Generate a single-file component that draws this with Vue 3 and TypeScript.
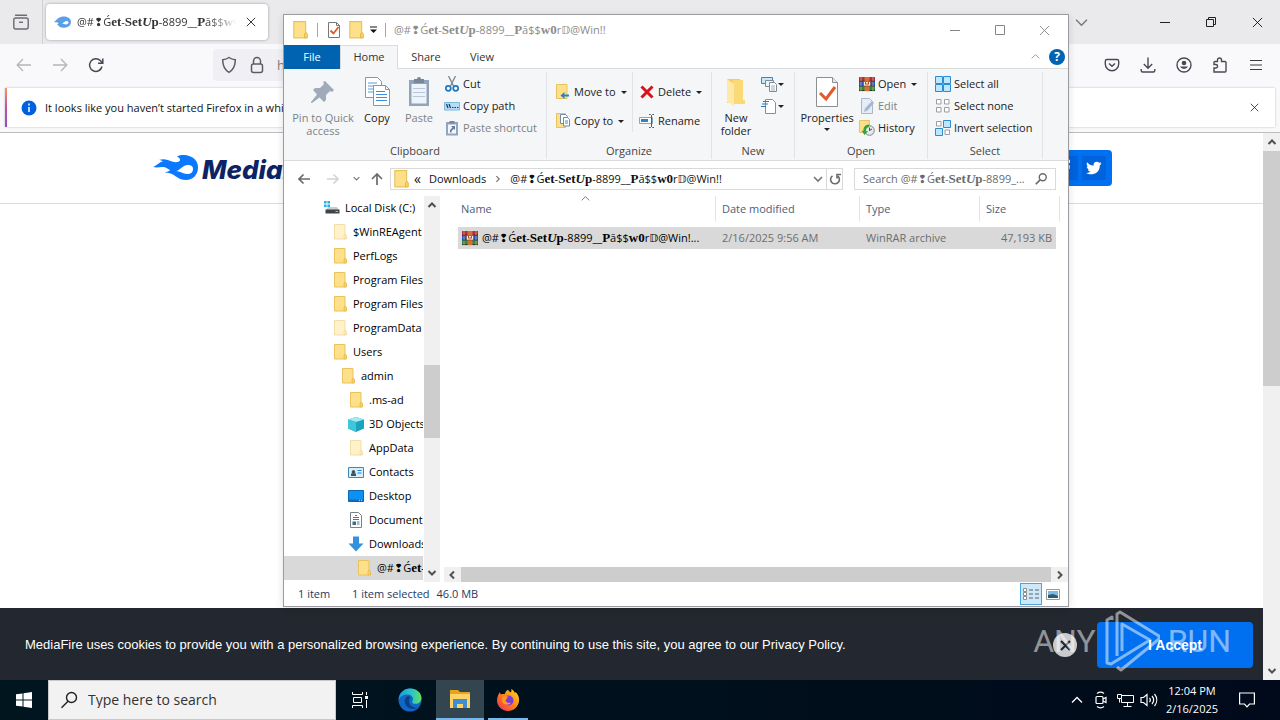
<script setup lang="ts">
import { ref } from 'vue'

interface TreeNode {
  label: string
  icon: string
  depth: number
}

interface NamePart {
  text: string
  style?: string
}

const stem: NamePart[] = [
  { text: '@#❢Ǵ' },
  { text: 'et', style: 'heavy' },
  { text: '-' },
  { text: 'Set', style: 'heavy' },
  { text: 'U', style: 'slanted' },
  { text: 'p', style: 'heavy' },
]

const tail: NamePart[] = [
  { text: '-8899__' },
  { text: 'P', style: 'heavy' },
  { text: 'ă$$' },
  { text: 'w0', style: 'heavy' },
]

const folderName: NamePart[] = [...stem, ...tail, { text: 'r𝔻@Win!!' }]
const shortName: NamePart[] = [...stem, ...tail, { text: 'r𝔻@Win!...' }]
const searchHint: NamePart[] = [{ text: 'Search ' }, ...stem, { text: '-8899_...' }]

const query = ref('')
const taskQuery = ref('')

const tree: TreeNode[] = [
  { label: 'Local Disk (C:)', icon: 'disk', depth: 0 },
  { label: '$WinREAgent', icon: 'folder-pale', depth: 1 },
  { label: 'PerfLogs', icon: 'folder', depth: 1 },
  { label: 'Program Files', icon: 'folder', depth: 1 },
  { label: 'Program Files (x86)', icon: 'folder', depth: 1 },
  { label: 'ProgramData', icon: 'folder-pale', depth: 1 },
  { label: 'Users', icon: 'folder', depth: 1 },
  { label: 'admin', icon: 'folder', depth: 2 },
  { label: '.ms-ad', icon: 'folder', depth: 3 },
  { label: '3D Objects', icon: 'cube', depth: 3 },
  { label: 'AppData', icon: 'folder-pale', depth: 3 },
  { label: 'Contacts', icon: 'contacts', depth: 3 },
  { label: 'Desktop', icon: 'desktop', depth: 3 },
  { label: 'Documents', icon: 'document', depth: 3 },
  { label: 'Downloads', icon: 'download', depth: 3 },
]
</script>

<template>
  <div class="screen">
    <svg class="sprite" aria-hidden="true">
      <symbol id="folder" viewBox="0 0 16 16">
        <path d="M2.500.5h10.500v14.500h-10.500z" fill="#ffe08a" stroke="#e8c25c" />
        <path d="M12 15v-3.500l1.300-1.500 1.200 1.500V15z" fill="#fbd25f" stroke="#e2b548" stroke-width=".8" />
      </symbol>
      <symbol id="folder-pale" viewBox="0 0 16 16">
        <path d="M2.500.5h10.500v14.500h-10.500z" fill="#fff1c8" stroke="#f1deaa" />
        <path d="M12 15v-3.500l1.300-1.500 1.200 1.500V15z" fill="#fdebb6" stroke="#efd99e" stroke-width=".8" />
      </symbol>
      <symbol id="disk" viewBox="0 0 16 16">
        <path d="M0 1h2.600v2.600H0zM3.400 1H6v2.600H3.400zM0 4.400h2.600V7H0zM3.400 4.400H6V7H3.400z" fill="#1fb5e0" />
        <path d="M4 7h9l2 3H2z" fill="#c9cccf" />
        <path d="M1.500 9.500h14v4h-14z" fill="#3f4448" />
        <path d="M11.500 11h2.500v1h-2.500z" fill="#6fe08a" />
      </symbol>
      <symbol id="cube" viewBox="0 0 16 16">
        <path d="M8 1l8 2.500v9L8 16l-8-3.500v-9z" fill="#1ba3bd" />
        <path d="M0 3.500L8 1l8 2.500L8 6z" fill="#a5eaf2" />
        <path d="M0 3.500L8 6v10l-8-3.500z" fill="#3fc6da" />
      </symbol>
      <symbol id="contacts" viewBox="0 0 16 16">
        <path d="M.5 3.500h15v10H.5z" fill="#d9eefb" stroke="#3f87b8" />
        <path d="M3 12V9.500h1.500a1.800 1.800 0 1 1 2 0H8V12z" fill="#3d5362" />
        <path d="M9.500 6.500h4M9.500 9h4" stroke="#1583d8" stroke-width="1.200" />
      </symbol>
      <symbol id="desktop" viewBox="0 0 16 16">
        <path d="M.5 2.500h15v11H.5z" fill="#0b91f2" stroke="#0868b4" />
        <path d="M1 11.500h14V13H1z" fill="#0a6fc4" />
        <path d="M11 12.300h1M13 12.300h1" stroke="#fff" stroke-width=".8" />
      </symbol>
      <symbol id="document" viewBox="0 0 16 16">
        <path d="M2.500.5h8l3 3v12h-11z" fill="#fff" stroke="#7b8388" />
        <path d="M7 3.500h2M5 5.500h6M5 7.500h6M9 10h2.500M9 12h2.500" stroke="#1c83cf" />
        <path d="M4.500 9.500h3.500v3.500H4.500z" fill="#3c6f82" />
      </symbol>
      <symbol id="download" viewBox="0 0 16 16">
        <path d="M5 .5h6v7h4.500L8 15.500.5 7.500H5z" fill="#3590dd" />
      </symbol>
      <symbol id="winrar" viewBox="0 0 16 16">
        <path d="M0 1h16v4.700H0z" fill="#b62b3f" />
        <path d="M0 5.700h16v4.600H0z" fill="#2f56c6" />
        <path d="M0 10.300h16V15H0z" fill="#2c8c3e" />
        <path d="M0 5.200h16M0 10h16M0 14.600h16" stroke="#1d1f3a" stroke-width=".8" />
        <path d="M5.500 1h5v14h-5z" fill="#d3722d" />
        <path d="M4.500 5.500h7v4.500h-7z" fill="#f4eee0" stroke="#5e4630" stroke-width=".6" />
        <path d="M6.500 6v2.500M8 7v2.500M9.500 6v2.500" stroke="#b7462e" />
        <path d="M2 1v4M2 6v4M2 11v4M14 1v4M14 6v4M14 11v4" stroke="#d8c65a" stroke-width=".7" />
      </symbol>
      <symbol id="sheet-check" viewBox="0 0 32 32">
        <path d="M5.500 1.500h16l5 5v24h-21z" fill="#fff" stroke="#8c8f92" />
        <path d="M21.500 1.500v5h5" fill="#e8e8e8" stroke="#8c8f92" />
        <path d="M9 17l6 6 9-12" fill="none" stroke="#e2592b" stroke-width="3" />
      </symbol>
      <symbol id="pin" viewBox="0 0 32 32">
        <path d="M18 5l9 9-2 2-2-1-4 4 0 5-2 2-4.500-4.500L5 27l-1 0 0-1 6-7.500L6 14l2-2h5l4-4-1-2z" fill="#9fabba" />
      </symbol>
      <symbol id="copy" viewBox="0 0 32 32">
        <path d="M4.500 1.500h12l4 4v16h-16z" fill="#fff" stroke="#8696a8" />
        <path d="M7 7h9M7 10h11M7 13h11M7 16h11" stroke="#5b9bd5" />
        <path d="M12.500 9.500h12l4 4v16h-16z" fill="#fff" stroke="#8696a8" />
        <path d="M24.500 9.500v4h4" fill="none" stroke="#8696a8" />
        <path d="M15 15.500h9M15 18.500h11M15 21.500h11M15 24.500h11" stroke="#3e8ddd" />
      </symbol>
      <symbol id="paste" viewBox="0 0 32 32">
        <path d="M6 4h20v26H6z" fill="#92a3ba" />
        <path d="M8.500 8h15v19.500h-15z" fill="#eef3fa" />
        <path d="M11 3h3a2 2 0 0 1 4 0h3v4H11z" fill="#76869b" />
        <path d="M10 12.500h12M10 16.500h12M10 20.500h12" stroke="#b8c7da" />
      </symbol>
      <symbol id="cut" viewBox="0 0 16 16">
        <path d="M4.500 0l5 10M11.500 0l-5 10" stroke="#7b868f" stroke-width="1.300" fill="none" />
        <circle cx="4.300" cy="12.300" r="2.500" fill="none" stroke="#1e78bd" stroke-width="1.700" />
        <circle cx="11.700" cy="12.300" r="2.500" fill="none" stroke="#1e78bd" stroke-width="1.700" />
      </symbol>
      <symbol id="copypath" viewBox="0 0 16 16">
        <path d="M.5 4.500h15v7.500H.5z" fill="#b6dcf7" stroke="#7cb7e0" />
        <path d="M2.500 6l1.500 4M5 6l1.500 4M8 9.500h1.500M10.500 9.500H12M13 9.500h1.500" stroke="#17395c" stroke-width="1.200" />
      </symbol>
      <symbol id="shortcut" viewBox="0 0 16 16">
        <path d="M2 2h12v13.500H2z" fill="#93a4bc" />
        <path d="M4 4.500h8v9H4z" fill="#f3f7fc" />
        <path d="M5.500 1h5v2.500h-5z" fill="#76869b" />
        <path d="M6 12.500V10l2.500-2.500L7 6h4v4L9.700 8.700 7.500 11v1.500z" fill="#5f7aa3" />
      </symbol>
      <symbol id="moveto" viewBox="0 0 16 16">
        <path d="M1.500.5h10.500v14H1.500z" fill="#ffe08a" stroke="#e8c25c" />
        <path d="M14 10.500h-4.500V8L5.500 11.500l4 3.500v-2.500H14z" fill="#2e83c6" />
      </symbol>
      <symbol id="copyto" viewBox="0 0 16 16">
        <path d="M1.500.5h9v14h-9z" fill="#ffe08a" stroke="#e8c25c" />
        <path d="M5.500 1.500h5l2 2v7h-7z" fill="#fff" stroke="#6f8ba6" />
        <path d="M8.500 4.500h4l2 2v6.500h-6z" fill="#fff" stroke="#6f8ba6" />
        <path d="M10 8h3M10 10h3" stroke="#3e8ddd" />
      </symbol>
      <symbol id="delete" viewBox="0 0 16 16">
        <path d="M2.500 2.500l11 11M13.500 2.500l-11 11" stroke="#d9131b" stroke-width="3" />
      </symbol>
      <symbol id="rename" viewBox="0 0 16 16">
        <path d="M.5 4.500h13v6H.5z" fill="#fff" stroke="#7da9ce" />
        <path d="M2 6h7v3H2z" fill="#2e83c6" />
        <path d="M10 1.500h1.500l1 1 1-1H15M10 14.500h1.500l1-1 1 1H15M12.500 2.500v11" fill="none" stroke="#55585c" />
      </symbol>
      <symbol id="newfolder" viewBox="0 0 32 32">
        <path d="M7 3h13v24H7z" fill="#f3cc63" />
        <path d="M13 4h10v20h2v4H13z" fill="#fbd977" />
        <path d="M7 3l7 5v22l-7-4z" fill="#ffe9a6" />
      </symbol>
      <symbol id="newitem" viewBox="0 0 16 16">
        <path d="M.5 1.500h11v6H.5z" fill="#cbe6f7" stroke="#3c87b8" />
        <path d="M4.500 4.500h8v6h-8z" fill="#e8f3fa" stroke="#7d8b96" />
        <path d="M8.500 6.500h5l2 2v7h-7z" fill="#fff" stroke="#7d8b96" />
        <path d="M10 10h4M10 12h4M10 14h4" stroke="#8a99a5" stroke-width=".8" />
      </symbol>
      <symbol id="easyaccess" viewBox="0 0 16 16">
        <path d="M4.500 1.500h7l3 3v11h-10z" fill="#fff" stroke="#8c8f92" />
        <path d="M2 3.500h6M1 6h6M0 8.500h5" stroke="#2e77b8" stroke-width="1.200" />
      </symbol>
      <symbol id="edit" viewBox="0 0 16 16">
        <path d="M2.500.5h8l3 3v12h-11z" fill="#e6ecf5" stroke="#a9b7c9" />
        <path d="M5 14l1-3.500L13 3l2 2-6.500 7.500z" fill="#a5b6cd" />
      </symbol>
      <symbol id="history" viewBox="0 0 16 16">
        <path d="M.5.5h10v12H.5z" fill="#ffe08a" stroke="#e8c25c" />
        <circle cx="10.500" cy="10.500" r="4.800" fill="#e3e8ea" stroke="#7d8588" />
        <path d="M10.500 7.500v3l2.500-1.500" fill="none" stroke="#44494c" />
        <path d="M10 4.500C6 4.500 4 7.500 4.500 11l-2-.5L5.500 15 9 11l-2 0c-.3-2 1-3.500 3-4z" fill="#33a33d" />
      </symbol>
      <symbol id="selectall" viewBox="0 0 16 16">
        <path d="M.5.5h7v7h-7zM8.500.5h7v7h-7zM.5 8.500h7v7h-7zM8.500 8.500h7v7h-7z" fill="#bfe6fc" stroke="#2a8dd4" />
      </symbol>
      <symbol id="selectnone" viewBox="0 0 16 16">
        <path d="M1.500 1.500h4.500v4.500h-4.500zM9.500 1.500h4.500v4.500H9.500zM1.500 9.500h4.500v4.500h-4.500zM9.500 9.500h4.500v4.500H9.500z" fill="#fff" stroke="#9b9ea1" />
      </symbol>
      <symbol id="invert" viewBox="0 0 16 16">
        <path d="M1.500 1.500h4.500v4.500h-4.500zM10 10h4.500v4.500H10z" fill="#fff" stroke="#9b9ea1" />
        <path d="M8.500.5h7v7h-7zM.5 8.500h7v7h-7z" fill="#bfe6fc" stroke="#2a8dd4" />
      </symbol>
      <symbol id="flame" viewBox="0 0 46 26">
        <path d="M0 12C5 10 6 7 10 6.500 8 5 7 5 6 5c5-2 9 0 13 1.500 3 1 5 1 7 0C28 5 27 3 24 1.500c3-2 8-2 12-.5 6 2 9 6 9 11.500 0 7-5 12.500-12 12.500-6 0-9-3-13-5.500-3-2-6-1-8-2.500 2 0 4-.5 5-2-3-2-5-3.500-8-3-3 .3-6 .7-9 0z" fill="#0a78ff" />
        <path d="M23 16c4 0 6-6 12-6 3 0 5 1 5 4s-2 5-6 5-7-3-11-3z" fill="#fff" />
      </symbol>
      <symbol id="x" viewBox="0 0 12 12">
        <path d="M1 1l10 10M11 1L1 11" stroke="currentColor" fill="none" />
      </symbol>
      <symbol id="chev-down" viewBox="0 0 12 12">
        <path d="M1 3.500l5 5 5-5" stroke="currentColor" fill="none" stroke-width="1.300" />
      </symbol>
      <symbol id="chev-up" viewBox="0 0 12 12">
        <path d="M1 8.500l5-5 5 5" stroke="currentColor" fill="none" stroke-width="1.300" />
      </symbol>
      <symbol id="sb-up" viewBox="0 0 10 10">
        <path d="M1.500 7L5 3.500 8.500 7" stroke="#505050" fill="none" stroke-width="2" />
      </symbol>
      <symbol id="sb-down" viewBox="0 0 10 10">
        <path d="M1.500 3L5 6.500 8.500 3" stroke="#505050" fill="none" stroke-width="2" />
      </symbol>
      <symbol id="sb-left" viewBox="0 0 10 10">
        <path d="M7 1.500L3.500 5 7 8.500" stroke="#505050" fill="none" stroke-width="2" />
      </symbol>
      <symbol id="sb-right" viewBox="0 0 10 10">
        <path d="M3 1.500L6.500 5 3 8.500" stroke="#505050" fill="none" stroke-width="2" />
      </symbol>
      <symbol id="crumb-next" viewBox="0 0 10 10">
        <path d="M3 1.500L6.500 5 3 8.500" stroke="#777" fill="none" stroke-width="1.500" />
      </symbol>
      <symbol id="crumb-down" viewBox="0 0 10 10">
        <path d="M1 3l4 4 4-4" stroke="#777" fill="none" stroke-width="1.700" />
      </symbol>
      <symbol id="lens" viewBox="0 0 16 16">
        <circle cx="10" cy="6" r="4" fill="none" stroke="currentColor" stroke-width="1.600" />
        <path d="M7 9l-5 5" stroke="currentColor" stroke-width="2" />
      </symbol>
    </svg>

    <main class="browser">
      <div class="tabbar">
        <button class="recent" aria-label="Recent browsing">
          <svg width="18" height="18" viewBox="0 0 18 18" fill="none" stroke="#6b6b75" stroke-width="1.400">
            <path d="M3.500 2.200h11" stroke-linecap="round" />
            <rect x="1.800" y="5" width="14.400" height="11" rx="2" />
            <path d="M7 9.300h4" />
          </svg>
        </button>
        <div class="tab">
          <svg class="favicon" width="17" height="12" viewBox="0 0 17 12">
            <path d="M0 6c2-1 3-4 7-5 5-1.500 10 1 10 5s-4 6-8 5.700C5 11.500 4.500 9 3 8.500 4 8 4.500 7.500 4.500 7 3 6.300 1.500 6.500 0 6z" fill="#3f8fe0" />
            <path d="M8 7.500c1.500 0 2-2.500 4.500-2.500 1.300 0 2 .6 2 1.500S13.500 8.500 12 8.500 9.500 7.500 8 7.500z" fill="#fff" />
          </svg>
          <span class="tab-title"><span v-for="(part, i) in folderName" :key="i" :class="part.style">{{ part.text }}</span></span>
          <button class="plain" aria-label="Close tab"><svg width="10" height="10"><use href="#x" /></svg></button>
        </div>
        <div class="win-controls">
          <button class="plain muted" aria-label="List tabs"><svg width="13" height="13"><use href="#chev-down" /></svg></button>
          <span class="grow"></span>
          <button class="plain" aria-label="Minimize"><svg width="10" height="10" viewBox="0 0 10 10"><path d="M0 5.500h10" stroke="#222" /></svg></button>
          <button class="plain" aria-label="Restore"><svg width="10" height="10" viewBox="0 0 10 10" fill="none" stroke="#222"><path d="M.5 2.500h7v7h-7zM2.500 2.500v-2h7v7h-2" /></svg></button>
          <button class="plain" aria-label="Close"><svg width="11" height="11"><use href="#x" /></svg></button>
        </div>
      </div>

      <div class="navbar">
        <button class="plain dim" aria-label="Back"><svg width="16" height="16" viewBox="0 0 16 16" fill="none" stroke="currentColor" stroke-width="1.300"><path d="M15 8H1.500M7 2L1.200 8 7 14" /></svg></button>
        <button class="plain dim" aria-label="Forward"><svg width="16" height="16" viewBox="0 0 16 16" fill="none" stroke="currentColor" stroke-width="1.300"><path d="M1 8h13.500M9 2l5.800 6L9 14" /></svg></button>
        <button class="plain" aria-label="Reload"><svg width="16" height="16" viewBox="0 0 16 16" fill="none" stroke="#4a4a55" stroke-width="1.500"><path d="M14 9.500A6.300 6.300 0 1 1 12.500 3.800L14.500 6M14.800 1.500V6.200H10" /></svg></button>
        <div class="urlbar">
          <svg width="16" height="18" viewBox="0 0 16 18" fill="none" stroke="#5b5b66" stroke-width="1.500"><path d="M8 1.500C6 3 4 3.500 1.700 3.800c0 5.500 1.300 9.700 6.300 12.500 5-2.800 6.300-7 6.300-12.500C12 3.500 10 3 8 1.500z" /></svg>
          <svg width="14" height="18" viewBox="0 0 14 18" fill="none" stroke="#5b5b66" stroke-width="1.500"><rect x="1.500" y="8" width="11" height="8.500" rx="2" /><path d="M3.500 8V5a3.500 3.500 0 0 1 7 0v3" /></svg>
          <input class="url" type="text" value="https" aria-label="Address" />
        </div>
        <div class="tools">
          <button class="plain" aria-label="Pocket"><svg width="16" height="16" viewBox="0 0 16 16" fill="none" stroke="#4a4a55" stroke-width="1.400"><path d="M3 2.500h10a1.700 1.700 0 0 1 1.700 1.700V7A6.700 6.700 0 0 1 1.300 7V4.200A1.700 1.700 0 0 1 3 2.500zM5 6.500l3 2.800 3-2.800" /></svg></button>
          <button class="plain" aria-label="Downloads"><svg width="16" height="16" viewBox="0 0 16 16" fill="none" stroke="#4a4a55" stroke-width="1.400"><path d="M8 .5v10.500M3.800 7L8 11.200 12.200 7M1.200 12v1.500a1.500 1.500 0 0 0 1.500 1.500h10.600a1.500 1.500 0 0 0 1.500-1.500V12" /></svg></button>
          <button class="plain" aria-label="Account"><svg width="16" height="16" viewBox="0 0 16 16"><circle cx="8" cy="8" r="7" fill="none" stroke="#4a4a55" stroke-width="1.400" /><circle cx="8" cy="6" r="2.300" fill="#4a4a55" /><path d="M4 9.500h8a4.500 4.500 0 0 1-8 0z" fill="#4a4a55" /></svg></button>
          <button class="plain" aria-label="Extensions"><svg width="16" height="16" viewBox="0 0 16 16" fill="none" stroke="#4a4a55" stroke-width="1.400"><path d="M2 15v-4h1.800a1.700 1.700 0 0 0 0-3.500H2V5.500A1 1 0 0 1 3 4.500h2.500V3a2 2 0 0 1 4 0v1.500H13a1 1 0 0 1 1 1V14a1 1 0 0 1-1 1z" /></svg></button>
          <button class="plain" aria-label="Menu"><svg width="14" height="14" viewBox="0 0 14 14" stroke="#3b3b44" stroke-width="1.200"><path d="M1 2.500h12M1 7h12M1 11.500h12" /></svg></button>
        </div>
      </div>

      <div class="notice-area">
        <div class="notice">
          <svg width="16" height="16" viewBox="0 0 16 16"><circle cx="8" cy="8" r="7.500" fill="#0060df" /><path d="M8 3.500v2M8 7v5" stroke="#fff" stroke-width="1.500" /></svg>
          <p>It looks like you haven’t started Firefox in a while.</p>
          <button class="plain" aria-label="Dismiss"><svg width="9" height="9"><use href="#x" /></svg></button>
        </div>
      </div>

      <div class="viewport">
        <div class="page">
          <header class="site-head">
            <a class="logo" href="#">
              <svg width="46" height="26"><use href="#flame" /></svg>
              <span>MediaFire</span>
            </a>
            <div class="share">
              <a href="#" aria-label="Facebook"><svg width="22" height="22" viewBox="0 0 22 22"><path d="M9 20v-8H6.500V8.500H9V6.500C9 4 10.500 2.800 12.800 2.800h2.200V6h-1.500c-1 0-1.300.5-1.300 1.300v1.200h2.700l-.4 3.500h-2.300v8z" fill="#fff" /></svg></a>
              <a href="#" aria-label="Twitter"><svg width="22" height="22" viewBox="0 0 22 22"><path d="M18.500 6.200c-.6.300-1.200.4-1.800.5.700-.4 1.100-1 1.400-1.700-.6.400-1.300.6-2 .8a3.200 3.200 0 0 0-5.500 2.900C8 8.600 5.700 7.300 4.100 5.300c-.9 1.500-.4 3.300 1 4.300-.5 0-1-.2-1.400-.4 0 1.500 1 2.900 2.500 3.200-.5.100-.9.100-1.400 0 .4 1.300 1.600 2.200 3 2.200-1.300 1-3 1.500-4.700 1.300 4.700 3 13.700 1.200 13.700-7.500 0 0 1.100-.9 1.700-2.200z" fill="#fff" /></svg></a>
            </div>
          </header>
          <div class="cookies">
            <p>MediaFire uses cookies to provide you with a personalized browsing experience. By continuing to use this site, you agree to our Privacy Policy.</p>
            <button class="dismiss" aria-label="Close cookie notice"><svg width="11" height="11" viewBox="0 0 11 11"><path d="M1 1l9 9M10 1l-9 9" stroke="#23272f" stroke-width="2.200" /></svg></button>
            <button class="accept">I Accept</button>
          </div>
        </div>
        <div class="scroll-v page-scroll">
          <svg width="10" height="10"><use href="#sb-up" /></svg>
          <div class="track"><div class="thumb page-thumb"></div></div>
          <svg width="10" height="10"><use href="#sb-down" /></svg>
        </div>
      </div>
    </main>

    <section class="explorer" aria-label="File Explorer">
      <div class="titlebar">
        <svg width="18" height="18"><use href="#folder" /></svg>
        <i class="bar"></i>
        <svg width="16" height="16" viewBox="0 0 16 16"><path d="M2.500.5h8l3 3v12h-11z" fill="#fff" stroke="#777" /><path d="M10.500.5v3h3" fill="none" stroke="#777" /><path d="M4.500 8.500l3 3 5-6.500" fill="none" stroke="#e2592b" stroke-width="1.800" /></svg>
        <svg width="18" height="18"><use href="#folder" /></svg>
        <svg width="7" height="8" viewBox="0 0 7 8"><path d="M0 1h7" stroke="#111" /><path d="M0 3.500h7L3.500 7z" fill="#111" /></svg>
        <i class="bar"></i>
        <span class="title"><span v-for="(part, i) in folderName" :key="i" :class="part.style">{{ part.text }}</span></span>
        <div class="frame-buttons">
          <button class="plain" aria-label="Minimize"><svg width="10" height="10" viewBox="0 0 10 10"><path d="M0 5.500h10" stroke="currentColor" /></svg></button>
          <button class="plain" aria-label="Maximize"><svg width="10" height="10" viewBox="0 0 10 10"><path d="M.5.5h9v9h-9z" fill="none" stroke="currentColor" /></svg></button>
          <button class="plain" aria-label="Close"><svg width="11" height="11"><use href="#x" /></svg></button>
        </div>
      </div>

      <nav class="ribbon-tabs">
        <button class="file">File</button>
        <button class="current">Home</button>
        <button>Share</button>
        <button>View</button>
        <span class="grow"></span>
        <svg class="collapse" width="9" height="9"><use href="#chev-up" /></svg>
        <button class="help" aria-label="Help"><span>?</span></button>
      </nav>

      <div class="ribbon">
        <div class="group g-clipboard">
          <div class="body">
            <button class="big off pinbtn"><svg width="32" height="32"><use href="#pin" /></svg><span>Pin to Quick<br />access</span></button>
            <button class="big copybtn"><svg width="32" height="32"><use href="#copy" /></svg><span>Copy</span></button>
            <button class="big off copybtn"><svg width="32" height="32"><use href="#paste" /></svg><span>Paste</span></button>
            <div class="stack">
              <button><svg width="16" height="16"><use href="#cut" /></svg>Cut</button>
              <button><svg width="16" height="16"><use href="#copypath" /></svg>Copy path</button>
              <button class="off"><svg width="16" height="16"><use href="#shortcut" /></svg>Paste shortcut</button>
            </div>
          </div>
          <div class="caption">Clipboard</div>
        </div>
        <div class="group g-organize">
          <div class="body">
            <div class="stack loose first">
              <button><svg width="16" height="16"><use href="#moveto" /></svg>Move to<i class="caret"></i></button>
              <button><svg width="16" height="16"><use href="#copyto" /></svg>Copy to<i class="caret"></i></button>
            </div>
            <div class="stack loose second">
              <button><svg width="16" height="16"><use href="#delete" /></svg>Delete<i class="caret"></i></button>
              <button><svg width="16" height="16"><use href="#rename" /></svg>Rename</button>
            </div>
          </div>
          <div class="caption">Organize</div>
        </div>
        <div class="group g-new">
          <div class="body">
            <button class="big newbtn"><svg width="32" height="32"><use href="#newfolder" /></svg><span>New<br />folder</span></button>
            <div class="stack">
              <button aria-label="New item"><svg width="16" height="16"><use href="#newitem" /></svg><i class="caret near"></i></button>
              <button aria-label="Easy access"><svg width="16" height="16"><use href="#easyaccess" /></svg><i class="caret near"></i></button>
            </div>
          </div>
          <div class="caption">New</div>
        </div>
        <div class="group g-open">
          <div class="body">
            <button class="big propbtn"><svg width="32" height="32"><use href="#sheet-check" /></svg><span>Properties</span><i class="caret"></i></button>
            <div class="stack">
              <button><svg width="16" height="16"><use href="#winrar" /></svg>Open<i class="caret"></i></button>
              <button class="off"><svg width="16" height="16"><use href="#edit" /></svg>Edit</button>
              <button><svg width="16" height="16"><use href="#history" /></svg>History</button>
            </div>
          </div>
          <div class="caption">Open</div>
        </div>
        <div class="group g-select">
          <div class="body">
            <div class="stack">
              <button><svg width="16" height="16"><use href="#selectall" /></svg>Select all</button>
              <button><svg width="16" height="16"><use href="#selectnone" /></svg>Select none</button>
              <button><svg width="16" height="16"><use href="#invert" /></svg>Invert selection</button>
            </div>
          </div>
          <div class="caption">Select</div>
        </div>
      </div>

      <div class="address-row">
        <button class="plain" aria-label="Back"><svg width="12" height="12" viewBox="0 0 12 12" fill="none" stroke="#6b6b6b" stroke-width="1.700"><path d="M12 6H1M5.500 1.500L1 6l4.500 4.500" /></svg></button>
        <button class="plain" aria-label="Forward"><svg width="12" height="12" viewBox="0 0 12 12" fill="none" stroke="#d4d4d4" stroke-width="1.700"><path d="M0 6h11M6.500 1.500L11 6l-4.500 4.500" /></svg></button>
        <button class="plain slim" aria-label="Recent locations"><svg width="7" height="7"><use href="#crumb-down" /></svg></button>
        <button class="plain up" aria-label="Up"><svg width="12" height="12" viewBox="0 0 12 12" fill="none" stroke="#6b6b6b" stroke-width="1.700"><path d="M6 12V1M1 6l5-5 5 5" /></svg></button>
        <div class="crumbs">
          <svg width="18" height="18"><use href="#folder" /></svg>
          <span class="back">«</span>
          <a href="#">Downloads</a>
          <svg class="sep" width="8" height="8"><use href="#crumb-next" /></svg>
          <a href="#"><span v-for="(part, i) in folderName" :key="i" :class="part.style">{{ part.text }}</span></a>
          <span class="grow"></span>
          <button class="plain" aria-label="Previous locations"><svg width="10" height="10"><use href="#crumb-down" /></svg></button>
          <button class="plain refresh" aria-label="Refresh"><svg width="12" height="12" viewBox="0 0 12 12" fill="none" stroke="#6b6b6b" stroke-width="1.600"><path d="M3.500 2.800A4.400 4.400 0 1 0 9 3.200M8 5.500V1.500h4" /></svg></button>
        </div>
        <label class="search">
          <span v-if="!query" class="hint"><span v-for="(part, i) in searchHint" :key="i" :class="part.style">{{ part.text }}</span></span>
          <input v-model="query" type="text" aria-label="Search folder" />
          <svg width="14" height="14"><use href="#lens" /></svg>
        </label>
      </div>

      <div class="content">
        <ul class="tree">
          <li v-for="node in tree" :key="node.label" :class="'d' + node.depth">
            <svg width="16" height="16"><use :href="'#' + node.icon" /></svg>
            <span>{{ node.label }}</span>
          </li>
          <li class="d4 selected">
            <svg width="16" height="16"><use href="#folder" /></svg>
            <span><span v-for="(part, i) in folderName" :key="i" :class="part.style">{{ part.text }}</span></span>
          </li>
        </ul>
        <div class="scroll-v">
          <svg width="10" height="10"><use href="#sb-up" /></svg>
          <div class="track"><div class="thumb tree-thumb"></div></div>
          <svg width="10" height="10"><use href="#sb-down" /></svg>
        </div>
        <div class="files">
          <table>
            <thead>
              <tr>
                <th class="c-name">Name<svg class="sort" width="9" height="9"><use href="#chev-up" /></svg></th>
                <th class="c-date">Date modified</th>
                <th class="c-type">Type</th>
                <th class="c-size">Size</th>
              </tr>
            </thead>
            <tbody>
              <tr>
                <td><div class="cell-name"><svg width="16" height="16"><use href="#winrar" /></svg><span><span v-for="(part, i) in shortName" :key="i" :class="part.style">{{ part.text }}</span></span></div></td>
                <td>2/16/2025 9:56 AM</td>
                <td>WinRAR archive</td>
                <td class="num">47,193 KB</td>
              </tr>
            </tbody>
          </table>
          <div class="scroll-h">
            <svg width="10" height="10"><use href="#sb-left" /></svg>
            <div class="thumb-h"></div>
            <svg width="10" height="10"><use href="#sb-right" /></svg>
          </div>
        </div>
      </div>

      <footer class="status">
        <span class="count">1 item</span>
        <span>1 item selected</span>
        <span class="size">46.0 MB</span>
        <span class="grow"></span>
        <button class="view on" aria-label="Details view"><svg width="16" height="14" viewBox="0 0 16 14"><path d="M.5 1.500h3v3h-3zM.5 5.500h3v3h-3zM.5 9.500h3v3h-3z" fill="#fff" stroke="#8d8d8d" /><path d="M6 3h4M12 3h4M6 7h4M12 7h4M6 11h4M12 11h4" stroke="#59636b" /></svg></button>
        <button class="view" aria-label="Large icons view"><svg width="14" height="11" viewBox="0 0 14 11"><path d="M.5.5h13v10H.5z" fill="#fff" stroke="#9a9a9a" /><path d="M2 2h10v7H2z" fill="#7fb9e6" /><path d="M2 6l5-1 5 2v2H2z" fill="#2d5d6e" /></svg></button>
      </footer>
    </section>

    <div class="watermark" aria-hidden="true">
      <span>ANY</span>
      <svg width="56" height="62" viewBox="0 0 56 62" fill="none" stroke="currentColor" stroke-width="3" stroke-linejoin="round">
        <path d="M8 10V7L3 10v43l4 1L46 30 18 14v27" />
        <path d="M13 46V4l3-2 39 24v3L17 60l-4-3" />
      </svg>
      <span class="run">RUN</span>
    </div>

    <footer class="taskbar">
      <button class="task start" aria-label="Start"><svg width="16" height="16" viewBox="0 0 16 16"><path d="M0 2.300L6.500 1.400v6.100H0zM7.500 1.200L16 0v7.500H7.500zM0 8.500h6.500v6.100L0 13.700zM7.500 8.500H16V16l-8.500-1.200z" fill="#fff" /></svg></button>
      <label class="task-search">
        <svg width="18" height="18" viewBox="0 0 18 18" fill="none" stroke="#222" stroke-width="1.400"><circle cx="11.500" cy="6.500" r="5" /><path d="M8 10.200L1.500 16.800" /></svg>
        <input v-model="taskQuery" type="text" placeholder="Type here to search" aria-label="Search" />
      </label>
      <button class="task" aria-label="Task view"><svg width="17" height="16" viewBox="0 0 17 16" fill="none" stroke="#fff"><path d="M.5 0v2.500h10V0M.5 16v-2.500h10V16M1.500 5.500h8v5h-8zM14.500 0v3M14.500 8v8" /><path d="M13 4h3v3h-3z" fill="#fff" stroke="none" /></svg></button>
      <button class="task wide" aria-label="Microsoft Edge">
        <svg width="24" height="24" viewBox="0 0 24 24">
          <defs>
            <linearGradient id="edgeTop" x1="0" x2="1"><stop offset="0" stop-color="#1b9be0" /><stop offset=".6" stop-color="#2fc6c4" /><stop offset="1" stop-color="#65dd5c" /></linearGradient>
            <linearGradient id="foxBody" x1="1" y1="0" x2="0" y2="1"><stop offset="0" stop-color="#ffe226" /><stop offset=".45" stop-color="#ff8a16" /><stop offset="1" stop-color="#f0245e" /></linearGradient>
          </defs>
          <circle cx="12" cy="12" r="11.500" fill="#1068c4" />
          <path d="M.5 12C1 5 6 .5 12 .5c7 0 11.500 4.500 11.500 9.500 0 3.500-2.700 5.800-5.800 5.800-2.500 0-3.700-1-3.700-1.800 0-.7 1-1 1-3 0-2.500-2.400-4.500-6-4.500-4 0-7.500 2.500-8.500 5.500z" fill="url(#edgeTop)" />
          <path d="M9 8.500c-3 2-3.300 7 .5 10.500 3 2.500 7.500 2.500 11 .5-4 1-9.500-1-9.500-6.500 0-1.500.5-2.500 1.500-3.200C11.500 8.300 10 8 9 8.500z" fill="#0b3f86" />
        </svg>
      </button>
      <button class="task focused" aria-label="File Explorer">
        <svg width="22" height="20" viewBox="0 0 22 20"><path d="M1 1h8l2 2h10v4H1z" fill="#e8a21c" /><path d="M1 5h20v14H1z" fill="#fdd365" /><path d="M4 10h14v9h-4v-4H8v4H4z" fill="#3d8fd1" /></svg>
      </button>
      <button class="task running" aria-label="Firefox">
        <svg width="24" height="24" viewBox="0 0 24 24">
          <path d="M4 4c0 1 .5 2 1 2.500C6 6 7.500 6 8.500 6.300 9 4.500 10.500 2.500 12 1.500c.3 1.500 1.500 2 3 3 .5-1 .5-2.500.2-3.500C17 2 18.500 3.500 19 5l.7-1C22 6.500 23.500 9.500 23 13c-.6 6-5.500 10-11 10S1 18.500 1 12.500C1 9 2.500 6 4 4z" fill="url(#foxBody)" />
          <circle cx="12.500" cy="12.500" r="5" fill="#7b3bd6" />
          <path d="M7 9c2-1.500 4-1.300 5.500-.2L10.500 10c1 .5 0 1.500-1 2 .3 2.500 3 3.500 5.500 2.500-1.500 3.500-8 3-8.800-1.500C6 11.500 6 10 7 9z" fill="#ff9a1e" />
        </svg>
      </button>
      <span class="grow"></span>
      <div class="tray">
        <svg width="12" height="12"><use href="#chev-up" /></svg>
        <svg width="14" height="18" viewBox="0 0 14 18" fill="none" stroke="#fff" stroke-width="1.200"><path d="M3 2.500c2-1.500 5-1.500 7 0M3 15.500c2 1.500 5 1.500 7 0" /><rect x="2" y="5.500" width="7" height="7" rx="1" /><path d="M9 8l3-1.500v5L9 10" /></svg>
        <svg width="17" height="14" viewBox="0 0 17 14" fill="none" stroke="#fff"><path d="M5 2.500h11.500v7H4.500V6M10.500 9.500v3.500M6.500 13.500h8M.5 1.500h4v4h-4zM2.500 5.500v4" /></svg>
        <svg width="18" height="16" viewBox="0 0 18 16" fill="none" stroke="#fff" stroke-width="1.200"><path d="M1 5.500h2.500L7 2.500v11l-3.500-3H1zM9.500 6c1 1.200 1 2.800 0 4M12 4c2 2.400 2 5.600 0 8M14.500 2c3 3.600 3 8.400 0 12" /></svg>
      </div>
      <div class="clock"><span>12:04 PM</span><span>2/16/2025</span></div>
      <button class="task note" aria-label="Notifications"><svg width="16" height="16" viewBox="0 0 16 16" fill="none" stroke="#fff" stroke-width="1.200"><path d="M.6 1h14.800v11H10.500L8 14.800 5.500 12H.6z" /></svg></button>
    </footer>
  </div>
</template>

<style>
body {
  margin: 0;
}
</style>

<style scoped>
.screen {
  --ui: "Open Sans", "Noto Sans", "DejaVu Sans", sans-serif;
  position: relative;
  display: flex;
  flex-direction: column;
  height: 100vh;
  min-height: 480px;
  overflow: hidden;
  font: 11px/16px var(--ui);
  color: #111;
}
.sprite {
  position: absolute;
  width: 0;
  height: 0;
}
svg {
  flex: none;
  display: block;
}
button,
input {
  font: inherit;
  color: inherit;
  border: 0;
  padding: 0;
  margin: 0;
  background: none;
  outline: 0;
}
button {
  display: flex;
  align-items: center;
  white-space: nowrap;
}
a {
  color: inherit;
  text-decoration: none;
}
p {
  margin: 0;
}
.plain {
  justify-content: center;
}
.grow {
  flex: 1;
}
.heavy,
.slanted {
  font-family: "Liberation Serif", "DejaVu Serif", serif;
  font-size: 13px;
  line-height: 1;
  font-weight: bold;
}
.slanted {
  font-style: italic;
}

/* Browser */
.browser {
  flex: 1;
  min-height: 0;
  display: flex;
  flex-direction: column;
  background: #f9f9fb;
}
.tabbar {
  display: flex;
  align-items: center;
  height: 44px;
  background: #eaeaed;
}
.recent {
  width: 43px;
  height: 44px;
  justify-content: center;
  border-right: 1px solid #cfcfd8;
}
.tab {
  display: flex;
  align-items: center;
  gap: 6px;
  width: 206px;
  height: 36px;
  margin-left: 3px;
  padding: 0 8px;
  border-radius: 4px;
  background: #fff;
  box-shadow: 0 0 3px rgba(0, 0, 0, 0.35);
}
.favicon {
  opacity: 0.85;
}
.tab-title {
  flex: 1;
  min-width: 0;
  overflow: hidden;
  white-space: nowrap;
  color: #333;
  mask-image: linear-gradient(to right, #000 82%, transparent);
}
.tab .plain {
  width: 18px;
}
.win-controls {
  flex: 1;
  display: flex;
  margin-left: 804px;
}
.win-controls .plain {
  width: 46px;
}
.win-controls .muted {
  width: 18px;
  color: #777;
}
.navbar {
  display: flex;
  align-items: center;
  height: 42px;
  padding-left: 6px;
}
.navbar > .plain {
  width: 36px;
}
.dim {
  color: #b4b4ba;
}
.urlbar {
  flex: 1;
  display: flex;
  align-items: center;
  gap: 13px;
  height: 32px;
  margin: 0 30px 0 99px;
  padding-left: 8px;
  background: #f0f0f4;
  border-radius: 4px;
}
.url {
  flex: 1;
  min-width: 0;
  font-size: 13px;
  color: #84817e;
}
.tools {
  display: flex;
  width: 180px;
  padding-right: 6px;
}
.tools .plain {
  flex: 1;
}
.notice-area {
  padding: 2px 5px 5px 5px;
  border-bottom: 1px solid #bdbdc0;
}
.notice {
  display: flex;
  align-items: center;
  gap: 8px;
  height: 39px;
  padding: 0 16px 0 14px;
  border-left: 2px solid #c060a0;
  border-image: linear-gradient(#ff9a50, #c050a8, #8a4fd0) 1;
  background: #fff;
  box-shadow: 0 0 2px rgba(0, 0, 0, 0.25);
}
.notice p {
  flex: 1;
  padding-top: 1px;
}
.viewport {
  flex: 1;
  min-height: 0;
  display: flex;
}
.page {
  flex: 1;
  min-width: 0;
  display: flex;
  flex-direction: column;
  justify-content: space-between;
  background: #fff;
}
.site-head {
  display: flex;
  align-items: center;
  justify-content: space-between;
  height: 70px;
  padding: 0 151px 0 153px;
  border-bottom: 1px solid #dcdcdf;
}
.logo {
  display: flex;
  align-items: center;
  gap: 3px;
  font: italic 800 26px/30px "Inter", "Liberation Sans", sans-serif;
  color: #0c2466;
}
.logo span {
  padding-top: 3px;
}
.share {
  display: flex;
  gap: 4px;
  padding: 6px;
  border-radius: 4px;
  background: #0070f0;
}
.share a {
  padding: 1px;
  background: #0063dc;
  border-radius: 2px;
}
.cookies {
  display: flex;
  align-items: center;
  height: 72px;
  box-sizing: border-box;
  padding: 2px 10px 0 25px;
  background: #23272f;
  color: #fff;
  font: 13px/18px "Liberation Sans", Arial, sans-serif;
}
.cookies p {
  flex: 1;
}
.dismiss {
  justify-content: center;
  width: 24px;
  height: 24px;
  margin-right: 20px;
  border-radius: 50%;
  background: #c9cacc;
}
.accept {
  justify-content: center;
  width: 156px;
  height: 46px;
  border-radius: 4px;
  background: #0070f0;
  color: #fff;
  font-weight: bold;
  font-size: 14px;
}

/* Scrollbars */
.scroll-v {
  display: flex;
  flex-direction: column;
  align-items: center;
  width: 16px;
  padding: 4px 0;
  gap: 4px;
  box-sizing: border-box;
  background: #f0f0f0;
}
.track {
  flex: 1;
  align-self: stretch;
}
.thumb {
  background: #cdcdcd;
}
.page-scroll {
  width: 17px;
}
.page-thumb {
  height: 46%;
}
.tree-thumb {
  height: 73px;
  margin-top: 151px;
}
.scroll-h {
  display: flex;
  align-items: center;
  height: 15px;
  padding: 0 3px;
  gap: 4px;
  background: #f0f0f0;
}
.thumb-h {
  flex: 1;
  align-self: stretch;
  background: #cdcdcd;
}

/* Explorer window */
.explorer {
  position: absolute;
  left: 283px;
  right: 211px;
  top: 14px;
  bottom: 113px;
  display: flex;
  flex-direction: column;
  border: 1px solid #9a9aa0;
  background: #fff;
  box-shadow: 0 2px 8px rgba(0, 0, 0, 0.12);
}
.titlebar {
  display: flex;
  align-items: center;
  gap: 5px;
  height: 30px;
  padding: 0 1px 0 7px;
}
.titlebar .bar {
  width: 1px;
  height: 14px;
  margin: 0 3px;
  background: #a8a8a8;
}
.title {
  flex: 1;
  color: #8c8c8c;
  white-space: nowrap;
}
.frame-buttons {
  display: flex;
  color: #858585;
}
.frame-buttons .plain {
  width: 45px;
}
.ribbon-tabs {
  display: flex;
  align-items: center;
  height: 23px;
  padding-right: 3px;
  border-bottom: 1px solid #dadbdc;
}
.ribbon-tabs button {
  justify-content: center;
  width: 56px;
  height: 24px;
  color: #333;
}
.ribbon-tabs .file {
  background: #0063b1;
  color: #fff;
}
.ribbon-tabs .current {
  border: 1px solid #dadbdc;
  border-bottom: 0;
  background: #f5f6f7;
  box-sizing: border-box;
  width: 58px;
}
.collapse {
  color: #999;
  margin-right: 9px;
}
.ribbon-tabs .help {
  width: 16px;
  height: 16px;
  border-radius: 50%;
  background: #0063b1;
  color: #fff;
  font-weight: bold;
  font-size: 12px;
}
.ribbon {
  display: flex;
  height: 91px;
  border-bottom: 1px solid #dadbdc;
  background: #f5f6f7;
  color: #222;
}
.group {
  display: flex;
  flex-direction: column;
  justify-content: space-between;
  flex: none;
  box-sizing: border-box;
  margin: 3px 0 1px;
  border-right: 1px solid #e2e3e4;
}
.body {
  display: flex;
}
.caption {
  text-align: center;
  color: #444;
}
.g-clipboard {
  width: 263px;
}
.g-organize {
  width: 165px;
}
.g-new {
  width: 83px;
}
.g-open {
  width: 133px;
}
.g-select {
  width: 115px;
}
.big {
  flex-direction: column;
  gap: 2px;
  padding-top: 4px;
  line-height: 13px;
  text-align: center;
}
.big span {
  padding-top: 1px;
}
.pinbtn {
  width: 72px;
  padding-left: 6px;
  box-sizing: border-box;
}
.copybtn {
  width: 42px;
}
.newbtn {
  width: 48px;
}
.propbtn {
  width: 64px;
}
.off {
  color: #7d8287;
}
.stack {
  display: flex;
  flex-direction: column;
  padding-top: 1px;
}
.stack button {
  height: 22px;
  gap: 3px;
}
.loose {
  gap: 7px;
  padding-top: 9px;
}
.g-clipboard .stack {
  padding-left: 4px;
}
.first {
  width: 77px;
  padding-left: 8px;
  border-right: 1px solid #e2e3e4;
}
.second {
  padding-left: 6px;
}
.g-new .stack {
  padding-left: 1px;
}
.g-select .stack {
  padding-left: 7px;
}
.caret {
  border: 3px solid transparent;
  border-top-color: #222;
  border-bottom: 0;
  margin-left: 2px;
}
.caret.near {
  margin-left: -2px;
}
.big .caret {
  margin: 2px 0 0;
}
.address-row {
  display: flex;
  align-items: center;
  height: 35px;
  padding: 0 12px 0 5px;
}
.address-row > .plain {
  width: 29px;
}
.address-row > .slim {
  width: 19px;
}
.address-row > .up {
  width: 22px;
  margin-right: 2px;
}
.crumbs {
  flex: 1;
  display: flex;
  align-items: center;
  height: 20px;
  border: 1px solid #d9d9d9;
  padding-left: 1px;
  white-space: nowrap;
}
.back {
  font-size: 14px;
  margin: 0 8px 0 4px;
}
.sep {
  margin: 0 8px;
}
.crumbs .plain {
  width: 17px;
  height: 20px;
}
.crumbs .refresh {
  width: 16px;
  border-left: 1px solid #d9d9d9;
}
.search {
  position: relative;
  display: flex;
  align-items: center;
  width: 200px;
  height: 20px;
  margin-left: 11px;
  border: 1px solid #d9d9d9;
  color: #6b6b6b;
}
.hint {
  position: absolute;
  left: 8px;
  white-space: nowrap;
  pointer-events: none;
}
.search input {
  flex: 1;
  min-width: 0;
  padding-left: 8px;
}
.search svg {
  margin: 0 7px 0 3px;
}
.content {
  flex: 1;
  min-height: 0;
  display: flex;
}
.tree {
  width: 139px;
  margin: 0 1px 0 0;
  padding: 0;
  list-style: none;
  overflow: hidden;
  color: #000;
}
.tree li {
  display: flex;
  align-items: center;
  gap: 5px;
  height: 24px;
  white-space: nowrap;
  padding-left: 40px;
}
.tree .d1 {
  padding-left: 48px;
}
.tree .d2 {
  padding-left: 56px;
}
.tree .d3 {
  padding-left: 64px;
}
.tree .d4 {
  padding-left: 72px;
}
.tree .selected {
  background: #d9d9d9;
}
.files {
  flex: 1;
  min-width: 0;
  display: flex;
  flex-direction: column;
  justify-content: space-between;
  padding-left: 4px;
}
table {
  width: 602px;
  margin-left: 14px;
  table-layout: fixed;
  border-collapse: separate;
  border-spacing: 0;
}
th {
  position: relative;
  height: 26px;
  padding: 0 0 0 6px;
  font-weight: normal;
  text-align: left;
  color: #4c607a;
  border-right: 1px solid #e5e5e5;
}
thead::after {
  content: "";
  display: block;
  height: 5px;
}
.sort {
  position: absolute;
  left: 48%;
  top: -2px;
  color: #777;
}
.c-name {
  width: 254px;
  padding-left: 3px;
}
.c-date {
  width: 137px;
}
.c-type {
  width: 113px;
}
td {
  height: 22px;
  padding: 0 0 0 6px;
  background: #d9d9d9;
  color: #6d6d6d;
  white-space: nowrap;
}
td:first-child {
  padding-left: 4px;
}
.num {
  text-align: right;
  padding-right: 4px;
  border-right: 4px solid #fff;
}
.cell-name {
  display: flex;
  align-items: center;
  gap: 4px;
  color: #000;
}
.status {
  display: flex;
  align-items: center;
  height: 24px;
  padding: 0 4px 0 14px;
  color: #1e3a5f;
}
.count {
  width: 54px;
}
.size {
  margin-left: 7px;
}
.view {
  justify-content: center;
  width: 22px;
  height: 22px;
  box-sizing: border-box;
}
.view.on {
  border: 1px solid #4aa5dc;
  background: #cde8f8;
}

/* Watermark */
.watermark {
  position: absolute;
  right: 49px;
  bottom: 48px;
  display: flex;
  align-items: center;
  gap: 8px;
  color: rgba(255, 255, 255, 0.5);
  font: 32px/62px "Liberation Sans Narrow", "Roboto", sans-serif;
  pointer-events: none;
}

/* Taskbar */
.taskbar {
  display: flex;
  align-items: stretch;
  height: 40px;
  background: linear-gradient(to right, #00161f, #000a1a);
  color: #fff;
}
.task {
  justify-content: center;
  width: 48px;
  box-sizing: border-box;
}
.task.wide {
  width: 52px;
}
.task.focused {
  border-bottom: 2px solid #76b9ed;
  background: #33464f;
}
.task.running {
  background: linear-gradient(#76b9ed, #76b9ed) bottom / 40px 2px no-repeat;
}
.task-search {
  display: flex;
  align-items: center;
  gap: 10px;
  width: 288px;
  box-sizing: border-box;
  padding-left: 11px;
  border: 1px solid #c8c8c8;
  background: #f2f2f2;
}
.task-search input {
  flex: 1;
  min-width: 0;
  font-size: 14px;
}
.task-search input::placeholder {
  color: #333;
  opacity: 1;
}
.tray {
  display: grid;
  grid-template-columns: repeat(4, 24px);
  align-items: center;
  justify-items: center;
}
.clock {
  display: flex;
  flex-direction: column;
  justify-content: center;
  align-items: center;
  width: 62px;
  line-height: 18px;
}
.note {
  margin-right: 9px;
}
</style>
